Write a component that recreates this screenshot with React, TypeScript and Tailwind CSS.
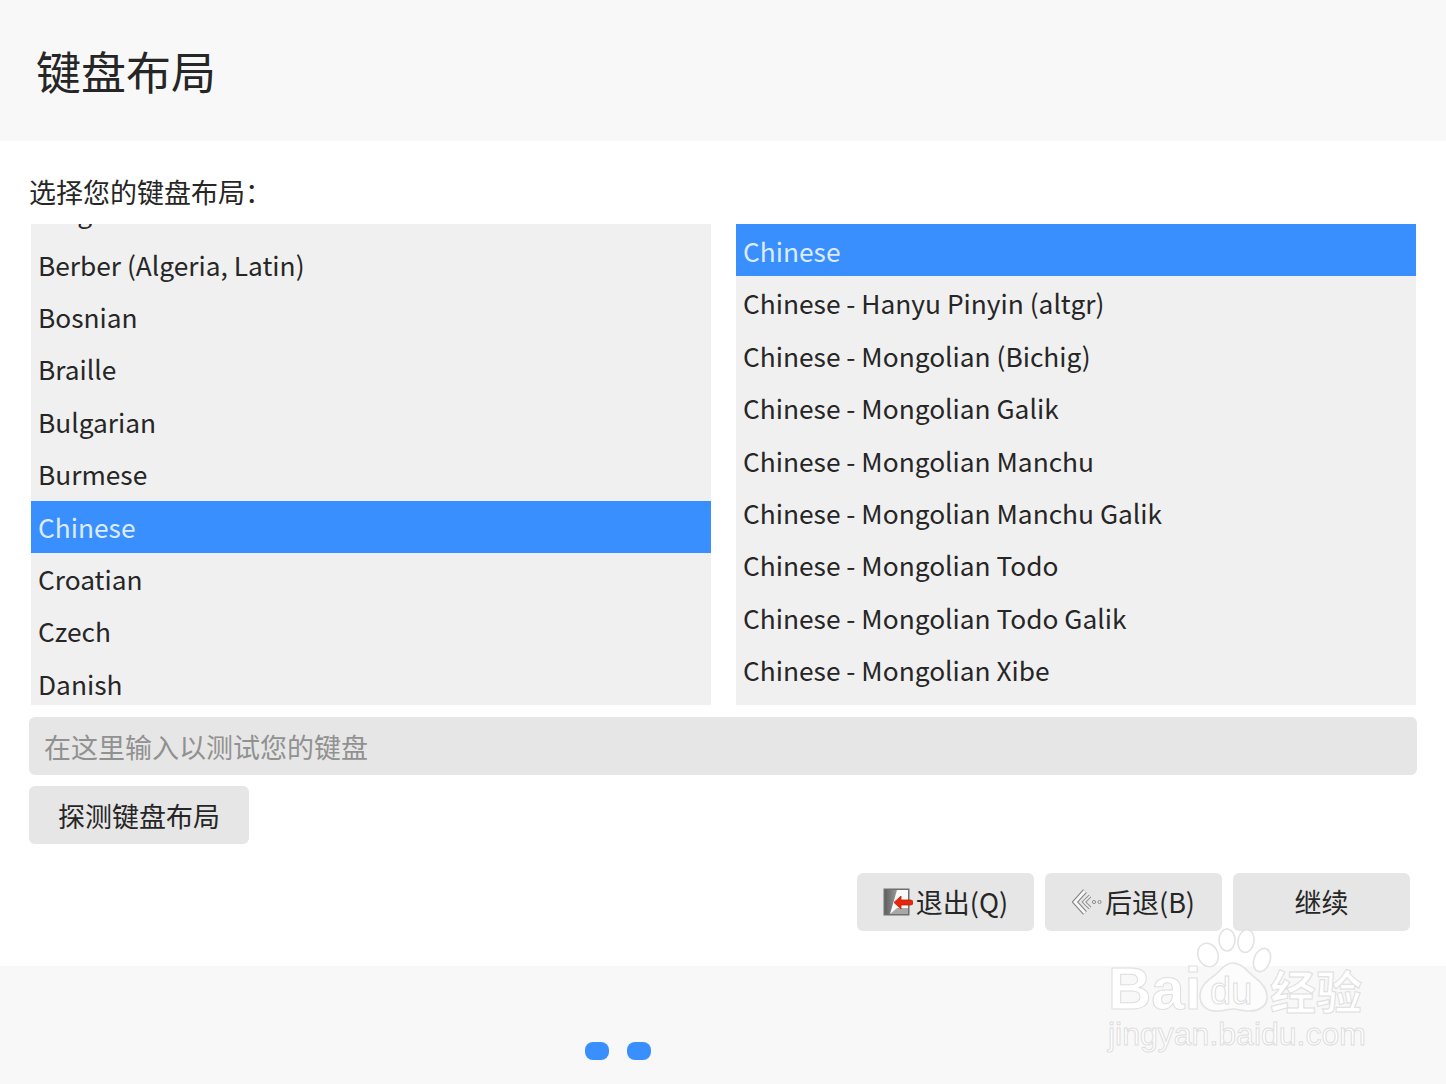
const leftRows = [
  "Belgian",
  "Berber (Algeria, Latin)",
  "Bosnian",
  "Braille",
  "Bulgarian",
  "Burmese",
  "Chinese",
  "Croatian",
  "Czech",
  "Danish",
];

const rightRows = [
  "Chinese",
  "Chinese - Hanyu Pinyin (altgr)",
  "Chinese - Mongolian (Bichig)",
  "Chinese - Mongolian Galik",
  "Chinese - Mongolian Manchu",
  "Chinese - Mongolian Manchu Galik",
  "Chinese - Mongolian Todo",
  "Chinese - Mongolian Todo Galik",
  "Chinese - Mongolian Xibe",
];

function ListRow({ label, nudge }: { label: string; nudge?: boolean }) {
  const selected = label === "Chinese";
  return (
    <div
      className={
        selected
          ? "flex h-[52.4px] shrink-0 items-center bg-[#3a8fff] px-[7px] text-[26.3px] text-[#dcebff]"
          : "flex h-[52.4px] shrink-0 items-center px-[7px] text-[26.3px]"
      }
    >
      <span className={nudge ? "relative top-px" : "relative -top-[0.5px]"}>{label}</span>
    </div>
  );
}

function QuitIcon() {
  return (
    <svg width="30" height="28" viewBox="0 0 30 28" className="shrink-0">
      <defs>
        <linearGradient id="door" x1="0" x2="1" y1="0" y2="0">
          <stop offset="0" stopColor="#5f5f5f" />
          <stop offset="1" stopColor="#d0d0d0" />
        </linearGradient>
      </defs>
      <rect x="0.5" y="0.5" width="26" height="27" fill="#6f6f6f" />
      <rect x="2" y="2" width="23" height="24" fill="url(#door)" />
      <path d="M14 2h11v24H7z" fill="#fafafa" />
      <path d="M7 26l7-6h11v6z" fill="#a8a8a8" />
      <path d="M11 14.5l7-6.5v4h9.5a2.5 2.5 0 010 5H18v4z" fill="#e3280c" stroke="#c21c05" strokeWidth="0.8" />
    </svg>
  );
}

function BackIcon() {
  return (
    <svg width="30" height="28" viewBox="0 0 30 28" fill="none" className="shrink-0">
      <path d="M13 3L3 14l10 11" stroke="#858585" strokeWidth="5" />
      <path d="M13 3L3 14l10 11" stroke="#f7f7f7" strokeWidth="2.8" />
      <path d="M18 8l-6 6 6 6" stroke="#8f8f8f" strokeWidth="3.6" />
      <path d="M18 8l-6 6 6 6" stroke="#f2f2f2" strokeWidth="1.6" />
      <circle cx="22" cy="14" r="1.6" stroke="#8f8f8f" />
      <circle cx="27.5" cy="14" r="1.6" stroke="#8f8f8f" />
    </svg>
  );
}

function PawMark() {
  return (
    <svg width="80" height="86" viewBox="0 0 80 86" fill="none" stroke="#e3e3e3" strokeWidth="1.6">
      <ellipse cx="13" cy="27" rx="10" ry="12" transform="rotate(-25 13 27)" fill="#fff" />
      <ellipse cx="32" cy="12" rx="8" ry="11" fill="#fff" />
      <ellipse cx="51" cy="13" rx="8" ry="11.5" transform="rotate(10 51 13)" fill="#fff" />
      <ellipse cx="67" cy="32" rx="8" ry="12" transform="rotate(20 67 32)" fill="#fff" />
      <path
        d="M38 35c-8 0-12 7-18 12C12 53 5 58 5 68c0 10 8 16 18 15 6 0 10-2 15-2s10 2 16 2c10 0 19-5 18-15 0-9-7-15-14-20-6-5-11-13-20-13z"
        fill="#fcfcfc"
      />
    </svg>
  );
}

function ActionButton({ children }: { children: React.ReactNode }) {
  return (
    <button className="flex h-[58px] w-[177px] items-center justify-center rounded-md bg-[#e6e6e6] pb-px text-[#262626]">
      {children}
    </button>
  );
}

export default function App() {
  return (
    <div className="relative flex h-[1084px] w-[1446px] flex-col overflow-hidden bg-white font-['Noto_Sans_CJK_SC','Noto_Sans',sans-serif] text-[27px] leading-none text-[#262626]">
      <header className="flex h-[141px] shrink-0 items-center bg-[#f8f8f8] pl-[36px]">
        <h1 className="text-[45px] font-normal leading-none">键盘布局</h1>
      </header>

      <main className="flex flex-1 flex-col px-[29px]">
        <div className="flex h-[83px] shrink-0 items-end pb-[19px] text-[27px]">选择您的键盘布局：</div>

        <div className="flex h-[481px] shrink-0 gap-[25px] pl-[2px] pr-px">
          <div className="w-[680px] overflow-hidden bg-[#f0f0f0]">
            <div className="-mt-[37.4px] flex flex-col">
              {leftRows.map((row) => (
                <ListRow key={row} label={row} />
              ))}
            </div>
          </div>
          <div className="flex w-[680px] flex-col overflow-hidden bg-[#f0f0f0]">
            {rightRows.map((row) => (
              <ListRow key={row} label={row} nudge />
            ))}
          </div>
        </div>

        <input
          readOnly
          placeholder="在这里输入以测试您的键盘"
          className="mt-[12px] h-[58px] w-[1388px] shrink-0 rounded-md bg-[#e6e6e6] px-[15px] placeholder:text-[#919191]"
        />

        <button className="mt-[11px] flex h-[58px] w-[220px] shrink-0 items-center justify-center rounded-md bg-[#e6e6e6]">
          探测键盘布局
        </button>

        <div className="mt-[29px] flex w-[1381px] justify-end gap-[11px]">
          <ActionButton>
            <QuitIcon />
            <span className="ml-[3px]">退出(Q)</span>
          </ActionButton>
          <ActionButton>
            <BackIcon />
            <span className="ml-[3px]">后退(B)</span>
          </ActionButton>
          <ActionButton>继续</ActionButton>
        </div>
      </main>

      <footer className="flex h-[118px] shrink-0 items-start justify-center gap-[18px] bg-[#f8f8f8] pr-[210px] pt-[76px]">
        <span className="h-[18px] w-[24px] rounded-[8px] bg-[#3a8fff]" />
        <span className="h-[18px] w-[24px] rounded-[8px] bg-[#3a8fff]" />
      </footer>

      {/* Watermark */}
      <div className="absolute left-[1108px] top-[928px] h-[125px] w-[262px] text-white [-webkit-text-stroke:1px_#dedede]">
        <span className="absolute left-0 top-[31px] font-['Liberation_Sans',sans-serif] text-[60px] font-bold leading-none">Bai</span>
        <div className="absolute left-[87px] top-0">
          <PawMark />
        </div>
        <span className="absolute left-[102px] top-[44px] font-['Liberation_Sans',sans-serif] text-[38px] leading-none">du</span>
        <span className="absolute left-[162px] top-[38px] text-[46px] font-bold leading-none">经验</span>
        <span className="absolute left-0 top-[90px] font-['Liberation_Sans',sans-serif] text-[32px] leading-none">jingyan.baidu.com</span>
      </div>
    </div>
  );
}
